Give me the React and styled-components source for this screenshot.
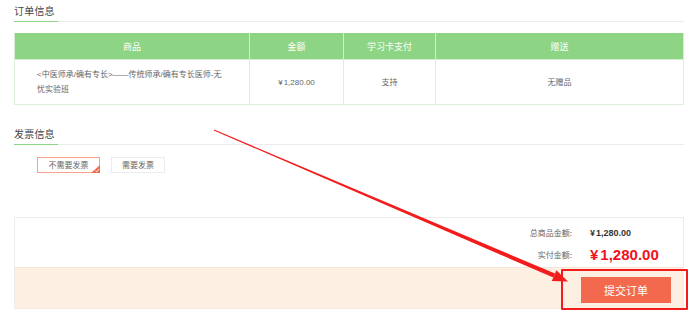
import React, { useState } from 'react'
import styled, { createGlobalStyle } from 'styled-components'

const GlobalStyle = createGlobalStyle`
  html, body {
    margin: 0;
    padding: 0;
    background: #fff;
  }
  body {
    font-family: "Liberation Sans", "Noto Sans CJK SC", sans-serif;
    color: #666;
  }
`;

const Page = styled.div`
  position: relative;
  width: 670px;
  height: 319px;
  padding: 0 16px 0 14px;
`;

const SectionHeader = styled.div`
  display: flex;
  align-items: flex-end;
  height: 21px;
  border-bottom: 1px solid #ebebeb;
  margin-top: ${p => p.top || 0}px;
`;

const SectionTitle = styled.span`
  display: inline-block;
  width: 44px;
  margin-bottom: -1px;
  border-bottom: 1px solid #8dd585;
  font-family: "Noto Sans CJK SC", sans-serif;
  font-size: 10px;
  line-height: 21px;
  color: #444;
  letter-spacing: 0.2px;
`;

const Table = styled.table`
  width: 100%;
  margin-top: 11px;
  border-collapse: collapse;
  table-layout: fixed;
  font-family: "Liberation Sans", "Noto Sans CJK SC", sans-serif;
`;

const HeadCell = styled.th`
  height: 26px;
  padding: 0;
  background: #8dd585;
  border: 1px solid #d7ecd4;
  border-top: none;
  color: #fff;
  font-weight: normal;
  font-size: 9px;
  text-align: center;
`;

const BodyCell = styled.td`
  height: 44px;
  padding: 0 ${p => (p.left ? '20px 0 22px' : '0')};
  border: 1px solid #dfeedd;
  font-size: 8px;
  line-height: 15px;
  color: #666;
  text-align: ${p => (p.left ? 'left' : 'center')};
`;

const Yen = styled.span`
  margin-right: ${p => (p.big ? 2 : 1)}px;
`;

const Choices = styled.div`
  display: flex;
  gap: 11px;
  margin: 12px 0 0 23px;
`;

const Choice = styled.button`
  position: relative;
  height: 16px;
  padding: 0;
  width: ${p => p.w}px;
  background: #fff;
  border: 1px solid ${p => (p.active ? '#f7a18c' : '#ececec')};
  color: #666;
  font-family: "Noto Sans CJK SC", sans-serif;
  font-size: 8px;
  line-height: 14px;
  cursor: pointer;
`;

const Corner = styled.svg`
  position: absolute;
  right: -1px;
  bottom: -1px;
`;

const Summary = styled.div`
  margin-top: 44px;
  border: 1px solid #ededed;
  border-bottom: none;
`;

const Totals = styled.div`
  display: flex;
  flex-direction: column;
  gap: 4px;
  height: 49px;
  padding: 7px 18px 0 0;
  box-sizing: border-box;
`;

const TotalRow = styled.div`
  display: grid;
  grid-template-columns: auto 75px;
  justify-content: end;
  align-items: center;
  column-gap: 18px;
  height: ${p => (p.big ? 20 : 15)}px;
`;

const Label = styled.span`
  font-family: "Noto Sans CJK SC", sans-serif;
  font-size: 8px;
  color: #666;
  text-align: right;
`;

const Amount = styled.span`
  font-family: "Liberation Sans", sans-serif;
  font-weight: bold;
  font-size: ${p => (p.big ? 15 : 9)}px;
  color: ${p => (p.big ? '#f0121c' : '#333')};
  white-space: nowrap;
`;

const Footer = styled.div`
  display: flex;
  justify-content: flex-end;
  height: 42px;
  padding: 9px 12px 0 0;
  box-sizing: border-box;
  background: #fdefe2;
  border-top: 1px solid #f8e4d6;
  border-bottom: 1px solid #f8e9de;
`;

const SubmitButton = styled.button`
  width: 90px;
  height: 26px;
  border: none;
  background: #f2694e;
  color: #fff;
  font-family: "Noto Sans CJK SC", sans-serif;
  font-size: 11px;
  cursor: pointer;
`;

const Highlight = styled.div`
  position: absolute;
  left: 561px;
  top: 269px;
  width: 123px;
  height: 37px;
  border: 2px solid #f21c1c;
  border-radius: 1px;
  pointer-events: none;
`;

const ArrowLayer = styled.svg`
  position: absolute;
  left: 0;
  top: 0;
  pointer-events: none;
`;

const App = () => {
  const [needInvoice, setNeedInvoice] = useState(false)

  return (
    <>
      <GlobalStyle />
      <Page>
        <SectionHeader>
          <SectionTitle>订单信息</SectionTitle>
        </SectionHeader>
        <Table>
          <colgroup>
            <col style={{ width: 235 }} />
            <col style={{ width: 94 }} />
            <col style={{ width: 92 }} />
            <col />
          </colgroup>
          <thead>
            <tr>
              <HeadCell>商品</HeadCell>
              <HeadCell>金额</HeadCell>
              <HeadCell>学习卡支付</HeadCell>
              <HeadCell>赠送</HeadCell>
            </tr>
          </thead>
          <tbody>
            <tr>
              <BodyCell left>
                &lt;中医师承/确有专长&gt;——传统师承/确有专长医师-无<br />忧实验班
              </BodyCell>
              <BodyCell><Yen>¥</Yen>1,280.00</BodyCell>
              <BodyCell>支持</BodyCell>
              <BodyCell>无赠品</BodyCell>
            </tr>
          </tbody>
        </Table>

        <SectionHeader top={18}>
          <SectionTitle>发票信息</SectionTitle>
        </SectionHeader>
        <Choices>
          <Choice w={63} active={!needInvoice} onClick={() => setNeedInvoice(false)}>
            不需要发票
            {!needInvoice && (
              <Corner width="9" height="8" viewBox="0 0 9 8">
                <polygon points="9,0 9,8 0,8" fill="#f2694e" />
                <polyline points="4.5,5.6 5.8,6.8 8,4" fill="none" stroke="#fff" strokeWidth="0.9" />
              </Corner>
            )}
          </Choice>
          <Choice w={54} active={needInvoice} onClick={() => setNeedInvoice(true)}>
            需要发票
          </Choice>
        </Choices>

        <Summary>
          <Totals>
            <TotalRow>
              <Label>总商品金额:</Label>
              <Amount><Yen>¥</Yen>1,280.00</Amount>
            </TotalRow>
            <TotalRow big>
              <Label>实付金额:</Label>
              <Amount big><Yen big>¥</Yen>1,280.00</Amount>
            </TotalRow>
          </Totals>
          <Footer>
            <SubmitButton>提交订单</SubmitButton>
          </Footer>
        </Summary>

        <Highlight />
        <ArrowLayer width="700" height="319" viewBox="0 0 700 319">
          <polygon
            points="214.2,129.6 213.8,130.4 553.3,277.6 555.0,273.6"
            fill="#f21c1c"
          />
          <polygon points="568,281.5 551.8,281.0 556.4,270.2" fill="#f21c1c" />
        </ArrowLayer>
      </Page>
    </>
  )
}

export default App
